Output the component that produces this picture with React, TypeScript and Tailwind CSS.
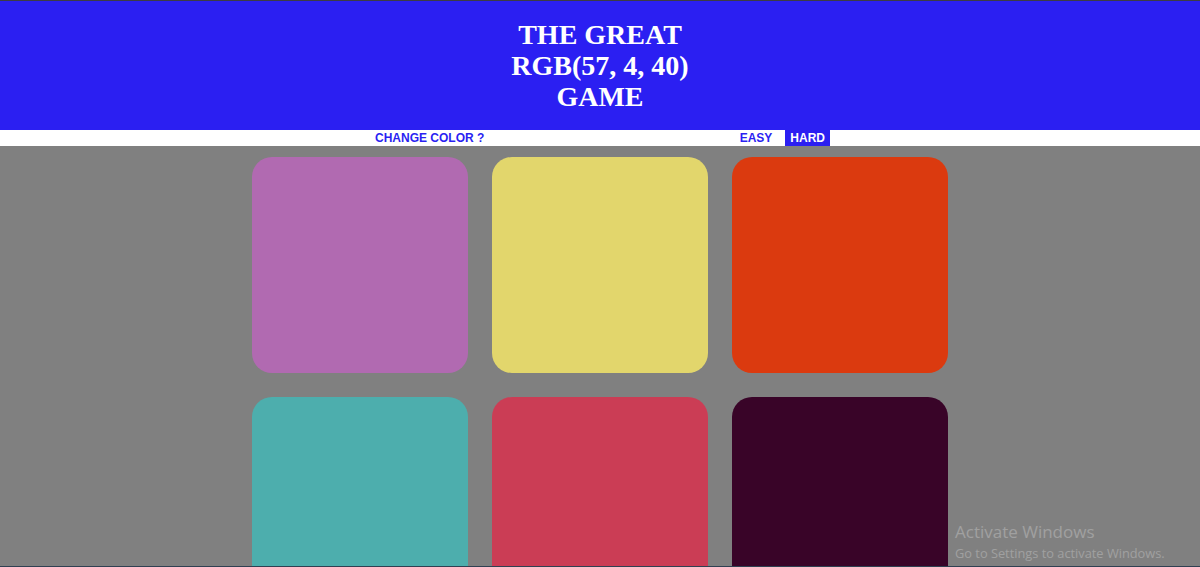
const squares = ['#b16ab1', '#e2d66c', '#db3a0f', '#4daead', '#cb3d55', '#390428']

export default function App() {
  return (
    <div className="relative h-[567px] w-full overflow-hidden border-t border-b border-t-[#3c3c44] border-b-[#2f4052] bg-[#808080]">
      {/* Header */}
      <header className="h-[129px] bg-[#2b1ff2] pt-[18px] text-center">
        <h1 className="font-['Liberation_Serif',serif] text-[28px] font-bold uppercase leading-[31px] text-white">
          The Great
          <br />
          RGB(57, 4, 40)
          <br />
          Game
        </h1>
      </header>

      {/* Stripe */}
      <nav className="h-4 bg-white">
        <div className="mx-auto flex h-4 w-[460px] items-stretch font-['Liberation_Sans',Arial,sans-serif] text-[12px] font-bold leading-4 text-[#2b1ff2]">
          <button className="px-[5px] uppercase">Change Color ?</button>
          <span className="flex-1" />
          <button className="px-[5px] uppercase">Easy</button>
          <button className="ml-2 bg-[#2b1ff2] px-[5px] uppercase text-white">Hard</button>
        </div>
      </nav>

      {/* Squares */}
      <div className="mx-auto grid w-[696px] grid-cols-3 gap-6 pt-[11px]">
        {squares.map((c) => (
          <div key={c} className="h-[216px] rounded-[20px]" style={{ backgroundColor: c }} />
        ))}
      </div>

      {/* Watermark */}
      <div className="pointer-events-none absolute left-[955px] top-[519px] font-['Open_Sans','Noto_Sans',sans-serif] text-[#a0a0a0]">
        <div className="text-[17px] leading-[24px]">Activate Windows</div>
        <div className="text-[12.8px] leading-[18px]">Go to Settings to activate Windows.</div>
      </div>
    </div>
  )
}
